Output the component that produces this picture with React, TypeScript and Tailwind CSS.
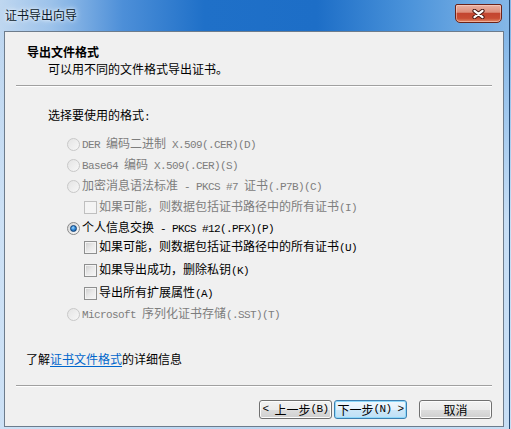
import React from "react";

function M({ children }: { children: React.ReactNode }) {
  return (
    <span className="font-['Liberation_Mono',monospace] text-[11px] tracking-[-0.6px] whitespace-pre">
      {children}
    </span>
  );
}

function Radio({ checked, disabled }: { checked?: boolean; disabled?: boolean }) {
  if (checked) {
    return (
      <span className="w-[13px] h-[13px] rounded-full border border-[#8a8a8a] bg-[linear-gradient(135deg,#d4d4d4,#fbfbfb)] flex items-center justify-center shrink-0">
        <span className="w-[7px] h-[7px] rounded-full border border-[#0d3f77] bg-[radial-gradient(circle_at_40%_35%,#a8dcff_0%,#3d93de_40%,#0d4f97_100%)]" />
      </span>
    );
  }
  return (
    <span
      className={
        disabled
          ? "w-[13px] h-[13px] rounded-full border border-[#c8c8c8] bg-[linear-gradient(135deg,#e4e4e4,#f7f7f7)] shrink-0"
          : "w-[13px] h-[13px] rounded-full border border-[#8a8a8a] bg-[linear-gradient(135deg,#d4d4d4,#fbfbfb)] shrink-0"
      }
    />
  );
}

function Check({ disabled }: { disabled?: boolean }) {
  return (
    <span
      className={
        disabled
          ? "w-[13px] h-[13px] border border-[#bfbfbf] bg-[#f4f4f4] shrink-0"
          : "w-[13px] h-[13px] border border-[#8e8f8f] bg-[linear-gradient(135deg,#cdcdcd_0%,#e9e9e9_50%,#f7f7f7_100%)] shadow-[inset_0_0_0_1px_#f4f4f4] shrink-0"
      }
    />
  );
}

function RadioRow({
  mt,
  checked,
  disabled,
  children,
}: {
  mt: string;
  checked?: boolean;
  disabled?: boolean;
  children: React.ReactNode;
}) {
  return (
    <div className={`${mt} h-[18px] flex items-center pl-[62px]`}>
      <Radio checked={checked} disabled={disabled} />
      <span
        className={
          disabled
            ? "ml-[2px] leading-[18px] text-[#7d7d7d] whitespace-nowrap"
            : "ml-[2px] leading-[18px] text-[#000] whitespace-nowrap"
        }
      >
        {children}
      </span>
    </div>
  );
}

function CheckRow({
  mt,
  disabled,
  children,
}: {
  mt: string;
  disabled?: boolean;
  children: React.ReactNode;
}) {
  return (
    <div className={`${mt} h-[18px] flex items-center pl-[79px]`}>
      <Check disabled={disabled} />
      <span
        className={
          disabled
            ? "ml-[2px] leading-[18px] text-[#7d7d7d] whitespace-nowrap"
            : "ml-[2px] leading-[18px] text-[#000] whitespace-nowrap"
        }
      >
        {children}
      </span>
    </div>
  );
}

function Sep() {
  return <div className="mx-[11px] h-[2px] border-t border-t-[#a0a0a0] border-b border-b-[#ffffff]" />;
}

export default function App() {
  return (
    <div className="w-[511px] h-[429px] overflow-hidden font-['Noto_Sans_CJK_SC',sans-serif] text-[12px] bg-[linear-gradient(to_bottom,rgba(206,226,246,0)_31px,rgba(206,226,246,0.9)_220px),linear-gradient(to_right,#bfd7f0_0%,#9cc2ea_10%,#4d8fd8_24%,#1f70c8_40%,#1d6ec7_62%,#4b93da_80%,#86b8e8_100%)]">
      <div className="w-[510px] h-[429px] border-r border-r-[#264a73] flex flex-col">
        {/* title bar */}
        <div className="h-[31px] flex items-start justify-between shrink-0">
          <div className="pl-[5px] pt-[6px] leading-[18px] text-[12px] text-[#0c1a2a] [text-shadow:0_0_6px_#ffffff,0_0_3px_#e8f2fc]">
            证书导出向导
          </div>
          <div className="mt-[4px] mr-[7px] w-[47px] h-[19px] rounded-b-[5px] rounded-t-[2px] border border-[#6b2218] bg-[linear-gradient(to_bottom,#eab1a3_0%,#de8f7c_42%,#c34530_50%,#c84c33_78%,#e28a67_100%)] shadow-[inset_0_0_0_1px_rgba(255,220,210,0.5)] flex items-center justify-center">
            <svg width="13" height="10" viewBox="0 0 13 10">
              <path d="M2.5 1.8 L10.5 8.2 M10.5 1.8 L2.5 8.2" stroke="#4a1a14" strokeWidth="4.2" strokeLinecap="round" />
              <path d="M2.5 1.8 L10.5 8.2 M10.5 1.8 L2.5 8.2" stroke="#ffffff" strokeWidth="2.2" strokeLinecap="round" />
            </svg>
          </div>
        </div>

        {/* body */}
        <div className="flex-1 flex">
          <div className="ml-[4px] mr-[5px] mb-[2px] w-[500px] h-[396px] border border-[#6d7c8c] bg-[#f0f0f0] flex flex-col text-[#000]">
            <div className="mt-[12px] pl-[22px] leading-[16px] font-bold">导出文件格式</div>
            <div className="pl-[43px] leading-[18px]">可以用不同的文件格式导出证书。</div>
            <div className="mt-[7px]">
              <Sep />
            </div>
            <div className="mt-[19px] pl-[43px] leading-[18px]">
              选择要使用的格式<M>:</M>
            </div>

            <RadioRow mt="mt-[9px]" disabled>
              <M>DER </M>编码二进制<M> X.509(.CER)(D)</M>
            </RadioRow>
            <RadioRow mt="mt-[3px]" disabled>
              <M>Base64 </M>编码<M> X.509(.CER)(S)</M>
            </RadioRow>
            <RadioRow mt="mt-[3px]" disabled>
              加密消息语法标准<M> - PKCS #7 </M>证书<M>(.P7B)(C)</M>
            </RadioRow>
            <CheckRow mt="mt-[3px]" disabled>
              如果可能，则数据包括证书路径中的所有证书<M>(I)</M>
            </CheckRow>
            <RadioRow mt="mt-[3px]" checked>
              个人信息交换<M> - PKCS #12(.PFX)(P)</M>
            </RadioRow>
            <CheckRow mt="mt-[1px]">
              如果可能，则数据包括证书路径中的所有证书<M>(U)</M>
            </CheckRow>
            <CheckRow mt="mt-[5px]">
              如果导出成功，删除私钥<M>(K)</M>
            </CheckRow>
            <CheckRow mt="mt-[5px]">
              导出所有扩展属性<M>(A)</M>
            </CheckRow>
            <RadioRow mt="mt-[3px]" disabled>
              <M>Microsoft </M>序列化证书存储<M>(.SST)(T)</M>
            </RadioRow>

            <div className="mt-[27px] pl-[21px] leading-[18px]">
              了解<span className="text-[#0066cc] underline underline-offset-2">证书文件格式</span>的详细信息
            </div>
            <div className="mt-[17px]">
              <Sep />
            </div>
            <div className="mt-[13px] flex justify-end pr-[11px]">
              <button className="w-[73px] h-[19px] rounded-[3px] border border-[#707070] bg-[linear-gradient(to_bottom,#f2f2f2_0%,#ebebeb_50%,#dddddd_51%,#cfcfcf_100%)] shadow-[inset_0_0_0_1px_#fcfcfc] flex items-center justify-center leading-[17px] text-[12px] text-[#000]">
                <M>&lt; </M>上一步<M>(B)</M>
              </button>
              <button className="ml-[2px] w-[73px] h-[19px] rounded-[3px] border border-[#3c7fb1] bg-[linear-gradient(to_bottom,#f0f8fd_0%,#e3f1fb_50%,#cde7f8_51%,#bfe0f6_100%)] shadow-[inset_0_0_0_1px_#8fd9fa] flex items-center justify-center leading-[17px] text-[12px] text-[#000]">
                下一步<M>(N) &gt;</M>
              </button>
              <button className="ml-[12px] w-[73px] h-[19px] rounded-[3px] border border-[#707070] bg-[linear-gradient(to_bottom,#f2f2f2_0%,#ebebeb_50%,#dddddd_51%,#cfcfcf_100%)] shadow-[inset_0_0_0_1px_#fcfcfc] flex items-center justify-center leading-[17px] text-[12px] text-[#000]">
                取消
              </button>
            </div>
          </div>
        </div>
      </div>
    </div>
  );
}
